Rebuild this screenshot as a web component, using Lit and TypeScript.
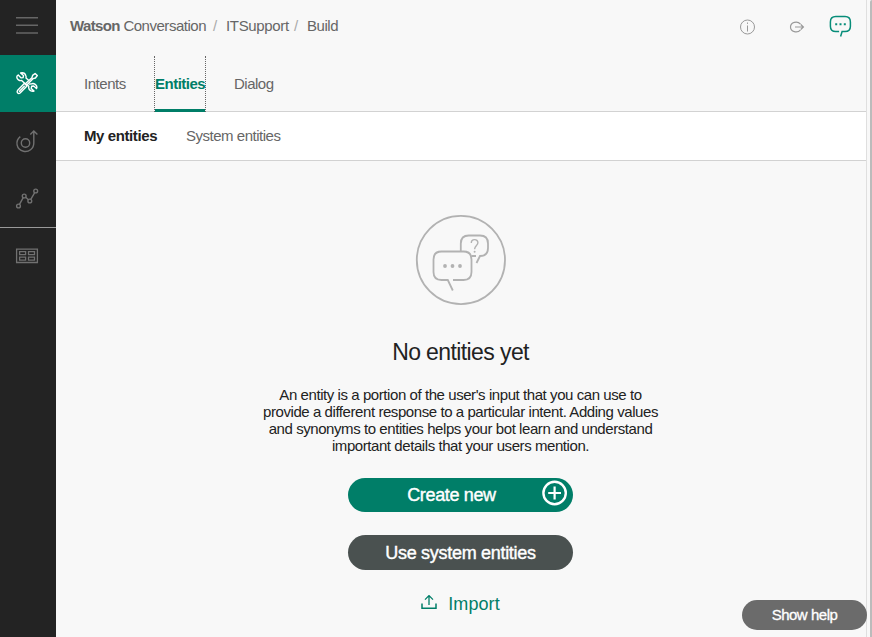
import { LitElement, html, css, svg } from "lit";
import { customElement } from "lit/decorators.js";

const menuIcon = svg`<path d="M16 17.8h22M16 25.3h22M16 33h22" stroke="#666" stroke-width="1.4"/>`;

@customElement("side-nav")
class SideNav extends LitElement {
  static styles = css`
    :host { display: flex; flex-direction: column; width: 56px; flex: none; background: #232323; }
    svg { display: block; flex: none; fill: none; }
    .active { background: #007e68; }
    .rule { height: 1px; background: #999; flex: none; }
  `;
  render() {
    return html`
      <svg width="56" height="55">${menuIcon}</svg>
      <svg class="active" width="56" height="57" viewBox="0 54 56 57" stroke="#fff" stroke-width="1.4" stroke-linejoin="round" stroke-linecap="round">
        <path d="M18.2 74.1l3 2.8 1.900-.3.4-2-2.900-2.600c2.300-.5 4.600.6 5.300 2.700.3.800.3 1.400.1 2.200l2.300 2.100M24.600 82.200l-2.900-2.700c-2.300.5-4.800-1.100-4.900-3.400 0-.8.4-1.500 1.400-2M29.500 83.100l2.300-.4c2.400-.6 5 1.100 5.100 3.400 0 .7-.1 1.100-.4 1.500l-2.800-2.600-2.100.3-.4 2.100 2.800 2.700c-2.400.6-5-.9-5.300-3.300l.1-1.500-2.100-2.100"/>
        <path d="M37.300 74.500l-2.200-2-2.500 1.900-.7 2.400-6.800 6.300M37.300 74.500l-1.900 2.500-2.400.7-6.700 6.700M24.500 82.300l2.500 2.600-6.900 7.100c-1.700 1.300-3.800-.5-2.600-2.400zM19.500 90.200l4.800-4.900"/>
      </svg>
      <svg width="56" height="57" viewBox="0 112 56 57" stroke="#717171" stroke-width="1.4">
        <circle cx="25.500" cy="143" r="4.200"/>
        <path d="M20.300 136.600c-5.500 4.300-4.100 13 3.200 14.700 5.100 1.100 10.300-2.400 10.300-8.300v-11.700M30.300 134.600l3.500-3.500 3.600 3.500"/>
      </svg>
      <svg width="56" height="58" viewBox="0 169 56 58" stroke="#717171" stroke-width="1.4">
        <circle cx="18.500" cy="206" r="1.900"/><circle cx="24.200" cy="196" r="1.900"/>
        <circle cx="29.800" cy="201" r="1.900"/><circle cx="35.700" cy="191" r="1.900"/>
        <path d="M19.500 204.300l3.700-6.600M25.700 197.200l2.700 2.500M30.800 199.300l3.900-6.600"/>
      </svg>
      <div class="rule"></div>
      <svg width="56" height="56" viewBox="0 228 56 56" stroke="#717171" stroke-width="1.300">
        <path d="M16.600 249.100h20.800v13.400H16.600zM19.600 251.700h6v3h-6zM28.500 251.700h6v3h-6zM19.600 257.200h6v3h-6zM28.500 257.200h6v3h-6z"/>
      </svg>`;
  }
}

@customElement("app-root")
class AppRoot extends LitElement {
  static styles = css`
    :host { display: flex; position: relative; width: 872px; height: 637px; overflow: hidden; background: #f8f8f8;
      font: 15px/18px "Liberation Sans", Arial, sans-serif; color: #666; }
    svg { fill: none; display: block; flex: none; }
    .page { width: 810px; flex: none; display: flex; flex-direction: column; border-right: 1px solid #dfdfdf; }
    .top { display: flex; height: 56px; padding-left: 14px; white-space: nowrap; }
    .crumbs { display: flex; flex: 1; padding-top: 17px; }
    .product { width: 143px; letter-spacing: -.48px; }
    .product b { letter-spacing: -.65px; }
    .sep { width: 13px; color: #aaa; }
    .space { width: 68px; letter-spacing: -.35px; }
    .here { letter-spacing: -.45px; }
    .tools { width: 132px; }
    .tabs { display: flex; height: 55px; padding-left: 28px; border-bottom: 1px solid #d2d2d2; line-height: 56px; letter-spacing: -.45px; white-space: nowrap; }
    .intents { width: 70px; }
    .entities { box-sizing: border-box; width: 52px; height: 56px; border: 1px dotted #666; border-width: 0 1px; font-weight: bold; color: #007e68; letter-spacing: -.5px;
      background: linear-gradient(#007e68, #007e68) 0 100% / 100% 3px no-repeat; }
    .dialog { padding-left: 28px; letter-spacing: -.5px; }
    .subtabs { display: flex; height: 48px; padding-left: 28px; border-bottom: 1px solid #d2d2d2; background: #fff; line-height: 47px; letter-spacing: -.48px; white-space: nowrap; }
    .mine { width: 102px; font-weight: bold; color: #222; letter-spacing: -.4px; }
    .empty { display: flex; flex-direction: column; align-items: center; padding: 53px 1px 0 0; color: #222; }
    h1 { margin: 31px 0 0; font-size: 23px; line-height: 30px; font-weight: normal; letter-spacing: -.6px; }
    p { margin: 19px 0 0; line-height: 17px; text-align: center; letter-spacing: -.43px; white-space: nowrap; }
    .button { display: flex; align-items: center; justify-content: center; position: relative; width: 225px; height: 34px; border-radius: 18px; background: #007e68; color: #fff;
      font-size: 18px; letter-spacing: -.35px; margin-top: 24px; -webkit-text-stroke: .4px #fff; }
    .label { margin-right: 18px; }
    .plus { position: absolute; right: 5px; top: 2px; }
    .system { height: 35px; margin-top: 23px; background: #4a5150; letter-spacing: -.3px; }
    .import { display: flex; align-items: center; margin-top: 23px; height: 22px; gap: 11px; color: #007e68; font-size: 18px; letter-spacing: .1px; }
    .help { position: absolute; left: 742px; top: 600px; width: 125px; height: 30px; border-radius: 15px; background: #6b6b6b; color: #fff; text-align: center; line-height: 30px; letter-spacing: -.48px; -webkit-text-stroke: .3px #fff; }
    .scroll { margin-left: auto; width: 2px; border-radius: 2px 0 0; background: #bbb; }
  `;
  render() {
    return html`
      <side-nav></side-nav>
      <div class="page">
        <div class="top">
          <div class="crumbs">
            <span class="product"><b>Watson</b> Conversation</span><span class="sep">/</span>
            <span class="space">ITSupport</span><span class="sep">/</span><span class="here">Build</span>
          </div>
          <svg class="tools" width="132" height="55" viewBox="734 0 132 55">
            <g stroke="#999"><circle cx="747.500" cy="27" r="7"/><path d="M747.500 25.500v6M747.500 22.500v1.400"/></g>
            <g stroke="#999" stroke-width="1.200"><path d="M800.500 24.100c-3.200-3.800-10-1.900-10 2.900s6.800 6.700 10 2.900M795 27h8.300M800.800 24.500l2.600 2.500-2.600 2.500"/></g>
            <path d="M840.600 36.500l1.500-4.900h2.900q5.400 0 5.400-5.400V22q0-5.400-5.400-5.400h-9.200q-5.400 0-5.400 5.400v4.200q0 5.400 5.400 5.400h3.300" stroke="#078d79" stroke-width="1.500"/>
            <path d="M835.200 23.200h2v2h-2zM839.500 23.200h2v2h-2zM843.800 23.200h2v2h-2z" fill="#078d79"/>
          </svg>
        </div>
        <div class="tabs"><span class="intents">Intents</span><span class="entities">Entities</span><span class="dialog">Dialog</span></div>
        <div class="subtabs"><span class="mine">My entities</span><span>System entities</span></div>
        <div class="empty">
          <svg width="91" height="92" viewBox="415 214 91 92" stroke="#b2b2b2" stroke-width="1.800">
            <circle cx="460.900" cy="260" r="44.100"/>
            <path d="M452.800 290.500l-5-10.500h-6.300q-8 0-8-8v-12.500q0-8 8-8h22q8 0 8 8V272q0 8-8 8H453"/>
            <path d="M460.800 251v-7.500q0-8 8-8H480q8 0 8 8v4.500q0 8-8 8l-3.500 7M471.500 256h4.500"/>
            <path d="M471.300 243c0-4.500 6.600-4.500 6.600-.3 0 2.800-3.300 2.700-3.300 6.600" stroke-width="1.400"/>
            <g fill="#b2b2b2" stroke="none"><circle cx="445" cy="266" r="1.900"/><circle cx="452.500" cy="266" r="1.900"/><circle cx="460" cy="266" r="1.900"/><circle cx="474.600" cy="251.700" r="1"/></g>
          </svg>
          <h1>No entities yet</h1>
          <p>An entity is a portion of the user's input that you can use to<br>provide a different response to a particular intent. Adding values<br>and synonyms to entities helps your bot learn and understand<br>important details that your users mention.</p>
          <div class="button"><span class="label">Create new</span>
            <svg class="plus" width="26" height="26" viewBox="0 0 26 26" stroke="#fff"><circle cx="12.600" cy="13" r="11.200" stroke-width="2.400"/><path d="M12.600 6.600v12.800M6.200 13H19" stroke-width="2.200"/></svg>
          </div>
          <div class="button system">Use system entities</div>
          <div class="import">
            <svg width="16" height="18" viewBox="0 1 16 18" stroke="#007e68" stroke-width="1.500"><path d="M1 9.500V14.200H15V9.500"/><path d="M8 11V2M4 5.600L8 1.600l4 4" stroke-width="1.300"/></svg>
            <span>Import</span>
          </div>
        </div>
      </div>
      <div class="scroll"></div>
      <div class="help">Show help</div>`;
  }
}
